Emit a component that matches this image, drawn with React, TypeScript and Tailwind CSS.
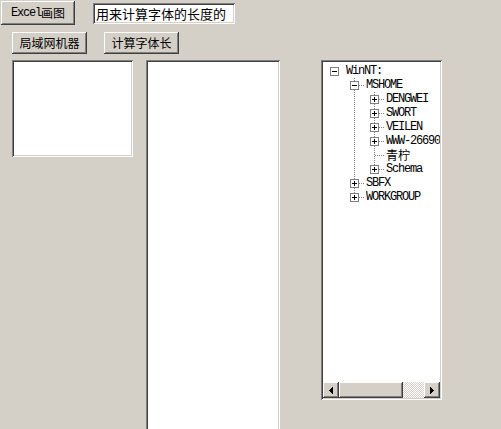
import React from "react";

const raised =
  "bg-[#d4d0c8] shadow-[inset_-1px_-1px_#404040,inset_1px_1px_#ffffff,inset_-2px_-2px_#808080,inset_2px_2px_#d4d0c8]";
const sunken =
  "bg-white shadow-[inset_1px_1px_#808080,inset_-1px_-1px_#ffffff,inset_2px_2px_#404040,inset_-2px_-2px_#d4d0c8]";

const cjk = { fontFamily: '"Noto Sans CJK SC", "Liberation Sans", sans-serif' };
const mono = { fontFamily: '"Liberation Mono", "Noto Sans CJK SC", monospace' };

type Node = {
  label: string;
  depth: number;
  expander?: "plus" | "minus";
  hasNext: boolean;
  // for each ancestor column, whether a sibling line runs through it
  trail: boolean[];
  root?: boolean;
};

const nodes: Node[] = [
  { label: "WinNT:", depth: 0, expander: "minus", hasNext: false, trail: [], root: true },
  { label: "MSHOME", depth: 1, expander: "minus", hasNext: true, trail: [false] },
  { label: "DENGWEI", depth: 2, expander: "plus", hasNext: true, trail: [false, true] },
  { label: "SWORT", depth: 2, expander: "plus", hasNext: true, trail: [false, true] },
  { label: "VEILEN", depth: 2, expander: "plus", hasNext: true, trail: [false, true] },
  { label: "WWW-2669004", depth: 2, expander: "plus", hasNext: true, trail: [false, true] },
  { label: "青柠", depth: 2, hasNext: true, trail: [false, true] },
  { label: "Schema", depth: 2, expander: "plus", hasNext: false, trail: [false, true] },
  { label: "SBFX", depth: 1, expander: "plus", hasNext: true, trail: [false] },
  { label: "WORKGROUP", depth: 1, expander: "plus", hasNext: false, trail: [false] },
];

const dot = { stroke: "#808080", strokeWidth: 1, strokeDasharray: "1 1" };

function TrailCell({ on }: { on: boolean }) {
  return (
    <svg width="20" height="14" className="shrink-0">
      {on && <line x1="9.5" y1="0" x2="9.5" y2="14" {...dot} />}
    </svg>
  );
}

function NodeCell({ n }: { n: Node }) {
  return (
    <svg width="20" height="14" className="shrink-0">
      {!n.root && <line x1="9.5" y1="0" x2="9.5" y2="7" {...dot} />}
      {!n.root && n.hasNext && <line x1="9.5" y1="8" x2="9.5" y2="14" {...dot} />}
      {!n.root && <line x1="10" y1="7.5" x2="20" y2="7.5" {...dot} />}
      {n.expander && (
        <g shapeRendering="crispEdges">
          <rect x="5.5" y="3.5" width="8" height="8" fill="#fff" stroke="#808080" />
          <line x1="7" y1="7.5" x2="12" y2="7.5" stroke="#000" />
          {n.expander === "plus" && <line x1="9.5" y1="5" x2="9.5" y2="10" stroke="#000" />}
        </g>
      )}
    </svg>
  );
}

function isCjk(s: string) {
  return /[\u4e00-\u9fff]/.test(s);
}

function TreeRow({ n }: { n: Node }) {
  return (
    <div className="flex h-[14px] items-center whitespace-nowrap">
      {n.trail.map((on, i) => (
        <TrailCell key={i} on={on} />
      ))}
      <NodeCell n={n} />
      {isCjk(n.label) ? (
        <span className="ml-[1px] text-[12px] leading-[14px] text-black" style={cjk}>
          {n.label}
        </span>
      ) : (
        <span
          className="ml-[1px] text-[12px] leading-[14px] tracking-[-1.2px] text-black"
          style={mono}
        >
          {n.label}
        </span>
      )}
    </div>
  );
}

function Arrow({ dir }: { dir: "left" | "right" }) {
  return (
    <div className={`${raised} flex h-[16px] w-[16px] shrink-0 items-center justify-center`}>
      <svg width="4" height="7" shapeRendering="crispEdges">
        {dir === "left" ? (
          <polygon points="4,0 4,7 0,3.5" fill="#000" />
        ) : (
          <polygon points="0,0 0,7 4,3.5" fill="#000" />
        )}
      </svg>
    </div>
  );
}

export default function App() {
  return (
    <div className="h-[429px] w-[501px] overflow-hidden bg-[#d4d0c8]">
      {/* top row: button + text field */}
      <div className="flex items-start pl-[1px] pt-[1px]">
        <button className={`${raised} flex h-[24px] w-[74px] items-center justify-center text-[12px] text-black`}>
          <span className="tracking-[-1.2px]" style={mono}>
            Excel
          </span>
          <span style={cjk}>画图</span>
        </button>
        <div
          className={`${sunken} ml-[18px] mt-[2px] flex h-[21px] w-[142px] items-center pl-[3px] text-[13px] leading-none text-black`}
          style={cjk}
        >
          用来计算字体的长度的
        </div>
      </div>

      {/* second row of buttons */}
      <div className="mt-[7px] flex pl-[12px]">
        <button
          className={`${raised} flex h-[22px] w-[75px] items-center justify-center text-[12px] text-black`}
          style={cjk}
        >
          局域网机器
        </button>
        <button
          className={`${raised} ml-[17px] flex h-[22px] w-[75px] items-center justify-center text-[12px] text-black`}
          style={cjk}
        >
          计算字体长
        </button>
      </div>

      {/* lists and tree */}
      <div className="mt-[6px] flex items-start pl-[12px]">
        <div className={`${sunken} h-[97px] w-[121px] shrink-0`} />
        <div className={`${sunken} ml-[13px] h-[380px] w-[134px] shrink-0`} />
        <div className={`${sunken} ml-[41px] flex h-[340px] w-[121px] shrink-0 flex-col p-[2px]`}>
          <div className="flex-1 overflow-hidden pl-[2px] pt-[2px]">
            {nodes.map((n, i) => (
              <TreeRow key={i} n={n} />
            ))}
          </div>
          <div className="flex h-[16px]">
            <Arrow dir="left" />
            <div className={`${raised} h-[16px] w-[64px] shrink-0`} />
            <div className="h-[16px] flex-1 bg-[repeating-conic-gradient(#ffffff_0_25%,#d4d0c8_0_50%)] bg-[length:2px_2px]" />
            <Arrow dir="right" />
          </div>
        </div>
      </div>
    </div>
  );
}
